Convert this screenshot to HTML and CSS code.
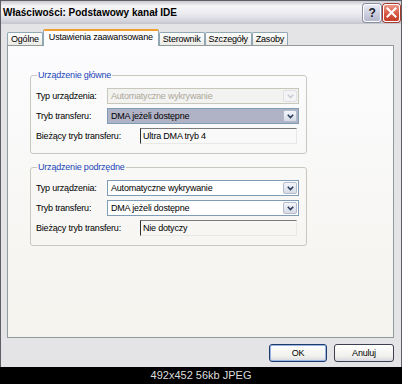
FILE: index.html
```html
<!DOCTYPE html>
<html lang="pl">
<head>
    <meta charset="UTF-8">
    <meta name="viewport" content="width=device-width, initial-scale=1.0">
    <title>Właściwości: Podstawowy kanał IDE</title>
    <link rel="stylesheet" href="styles.css">
</head>
<body>

<div class="window">
    <div class="titlebar">
        <span class="title">Właściwości: Podstawowy kanał IDE</span>
        <div class="caption-buttons">
            <span class="cap-btn help">?</span>
            <span class="cap-btn close">
                <svg width="11" height="11" viewBox="0 0 11 11">
                    <path d="M1.5 1.5 L9.5 9.5 M9.5 1.5 L1.5 9.5" stroke="#fff" stroke-width="2" stroke-linecap="square"/>
                </svg>
            </span>
        </div>
    </div>

    <div class="dialog-body">
        <div class="tabs">
            <div class="tab">Ogólne</div>
            <div class="tab active">Ustawienia zaawansowane</div>
            <div class="tab">Sterownik</div>
            <div class="tab">Szczegóły</div>
            <div class="tab">Zasoby</div>
        </div>

        <div class="panel">
            <fieldset class="group">
                <legend>Urządzenie główne</legend>
                <div class="row">
                    <span class="label">Typ urządzenia:</span>
                    <div class="combo disabled">
                        <span class="combo-text">Automatyczne wykrywanie</span>
                        <span class="combo-btn"><svg width="7" height="5" viewBox="0 0 7 5"><path d="M0.8 0.8 L3.5 3.6 L6.2 0.8" fill="none" stroke="#c8cdd6" stroke-width="1.6"/></svg></span>
                    </div>
                </div>
                <div class="row">
                    <span class="label">Tryb transferu:</span>
                    <div class="combo focused">
                        <span class="combo-text">DMA jeżeli dostępne</span>
                        <span class="combo-btn"><svg width="7" height="5" viewBox="0 0 7 5"><path d="M0.8 0.8 L3.5 3.6 L6.2 0.8" fill="none" stroke="#2c3c5c" stroke-width="1.6"/></svg></span>
                    </div>
                </div>
                <div class="row">
                    <span class="label wide">Bieżący tryb transferu:</span>
                    <div class="field">Ultra DMA tryb 4</div>
                </div>
            </fieldset>

            <fieldset class="group">
                <legend>Urządzenie podrzędne</legend>
                <div class="row">
                    <span class="label">Typ urządzenia:</span>
                    <div class="combo">
                        <span class="combo-text">Automatyczne wykrywanie</span>
                        <span class="combo-btn"><svg width="7" height="5" viewBox="0 0 7 5"><path d="M0.8 0.8 L3.5 3.6 L6.2 0.8" fill="none" stroke="#2c3c5c" stroke-width="1.6"/></svg></span>
                    </div>
                </div>
                <div class="row">
                    <span class="label">Tryb transferu:</span>
                    <div class="combo">
                        <span class="combo-text">DMA jeżeli dostępne</span>
                        <span class="combo-btn"><svg width="7" height="5" viewBox="0 0 7 5"><path d="M0.8 0.8 L3.5 3.6 L6.2 0.8" fill="none" stroke="#2c3c5c" stroke-width="1.6"/></svg></span>
                    </div>
                </div>
                <div class="row">
                    <span class="label wide">Bieżący tryb transferu:</span>
                    <div class="field">Nie dotyczy</div>
                </div>
            </fieldset>
        </div>

        <div class="buttons">
            <button class="btn default">OK</button>
            <button class="btn cancel">Anuluj</button>
        </div>
    </div>
</div>

<div class="caption">492x452 56kb JPEG</div>

</body>
</html>
```

FILE: styles.css
```css
body {
    margin: 0;
    width: 402px;
    height: 384px;
    background-color: #000;
    font-family: 'Liberation Sans', Arial, sans-serif;
    font-size: 9px;
    letter-spacing: -0.2px;
    color: #000;
    overflow: hidden;
}

.window {
    box-sizing: border-box;
    width: 402px;
    height: 367px;
    border: 1px solid #5e5e66;
    border-bottom: none;
    background-color: #e4e4e6;
    display: flex;
    flex-direction: column;
}

/* Title bar */
.titlebar {
    height: 23px;
    flex-shrink: 0;
    display: flex;
    align-items: center;
    justify-content: space-between;
    padding: 0 1px 0 2px;
    background: linear-gradient(#c9c9d1 0, #f6f6f8 22%, #ececf0 55%, #d6d6de 85%, #c4c4cc 100%);
}

.title {
    font-size: 10px;
    font-weight: bold;
    letter-spacing: 0;
    color: #000;
}

.caption-buttons {
    display: flex;
    gap: 2px;
}

.cap-btn {
    box-sizing: border-box;
    width: 18px;
    height: 18px;
    border: 1px solid #fff;
    border-radius: 3px;
    display: flex;
    align-items: center;
    justify-content: center;
}

.help {
    background: linear-gradient(#e8eaf4, #b4b8cc);
    box-shadow: 0 0 0 1px #8a8ea4;
    font-size: 12px;
    font-weight: bold;
    color: #1a1a2a;
}

.close {
    width: 17px;
    background: linear-gradient(#ee9a8a, #d4523c 60%, #c43e28);
    box-shadow: 0 0 0 1px #a83a2c;
}

/* Body */
.dialog-body {
    flex: 1;
    padding: 0 7px 0 6px;
    display: flex;
    flex-direction: column;
}

.tabs {
    height: 16px;
    margin-top: 5px;
    display: flex;
    align-items: flex-end;
}

.tab {
    box-sizing: border-box;
    height: 13px;
    padding: 0 3px;
    line-height: 12px;
    border: 1px solid #91a7b4;
    border-bottom: none;
    border-radius: 2px 2px 0 0;
    background: linear-gradient(#fefefe, #ecebe6);
    white-space: nowrap;
}

.tab.active {
    position: relative;
    z-index: 1;
    height: 17px;
    margin-bottom: -1px;
    padding: 0 5px;
    line-height: 13px;
    background: #fcfcfe;
    border-color: #91a7b4;
    border-top: 2px solid #f0a030;
}

.panel {
    box-sizing: border-box;
    height: 293px;
    border: 1px solid #919b9c;
    background: linear-gradient(#fcfcfe, #f4f3ee);
}

/* Group boxes */
.group {
    box-sizing: border-box;
    width: 277px;
    margin: 24px 0 0 22px;
    padding: 7px 7px 9px 5px;
    border: 1px solid #c8c8c0;
    border-radius: 3px;
}

.group + .group {
    margin-top: 8px;
}

.group legend {
    padding: 0 1px;
    margin-left: 1px;
    line-height: 11px;
    color: #1c46b8;
}

.row {
    height: 16px;
    display: flex;
    align-items: center;
}

.row + .row {
    margin-top: 4px;
}

.label {
    width: 71px;
    flex-shrink: 0;
    white-space: nowrap;
}

.label.wide {
    width: 104px;
}

/* Combo boxes */
.combo {
    box-sizing: border-box;
    width: 192px;
    height: 16px;
    border: 1px solid #7f9db9;
    background-color: #fff;
    display: flex;
    align-items: center;
    justify-content: space-between;
    padding: 0 1px 0 3px;
}

.combo-btn {
    box-sizing: border-box;
    width: 14px;
    height: 12px;
    border: 1px solid #b4bccc;
    border-radius: 2px;
    background: linear-gradient(#f4f6fa, #d4dae6);
    display: flex;
    align-items: center;
    justify-content: center;
}

.combo.focused {
    background-color: #b0b2c6;
}

.combo.disabled {
    border-color: #c9c7ba;
    background-color: #f2f2f0;
    color: #aca899;
}

.combo.disabled .combo-btn {
    border-color: #e0e0e4;
    background: #f4f4f6;
}

/* Read-only field */
.field {
    box-sizing: border-box;
    width: 157px;
    height: 16px;
    padding-left: 2px;
    line-height: 14px;
    border-top: 1px solid #7a7a7a;
    border-left: 1px solid #303030;
    border-right: 1px solid #e8e8e6;
    border-bottom: 1px solid #e8e8e6;
}

/* Dialog buttons */
.buttons {
    margin-top: 6px;
    display: flex;
    justify-content: flex-end;
    gap: 7px;
}

.btn {
    box-sizing: border-box;
    height: 18px;
    padding: 0;
    border: 1px solid #1c3a6a;
    border-radius: 3px;
    background: linear-gradient(#ffffff, #f0f0ec 70%, #d8d8e0);
    font-family: 'Liberation Sans', Arial, sans-serif;
    font-size: 9px;
    letter-spacing: -0.2px;
    color: #000;
}

.btn.default {
    width: 58px;
    box-shadow: inset 0 0 0 1px #9ab4e4;
}

.btn.cancel {
    width: 60px;
    border-color: #3c4050;
}

/* Image caption strip */
.caption {
    height: 17px;
    line-height: 17px;
    text-align: center;
    font-size: 11px;
    letter-spacing: 0;
    color: #dcdcdc;
}
```
